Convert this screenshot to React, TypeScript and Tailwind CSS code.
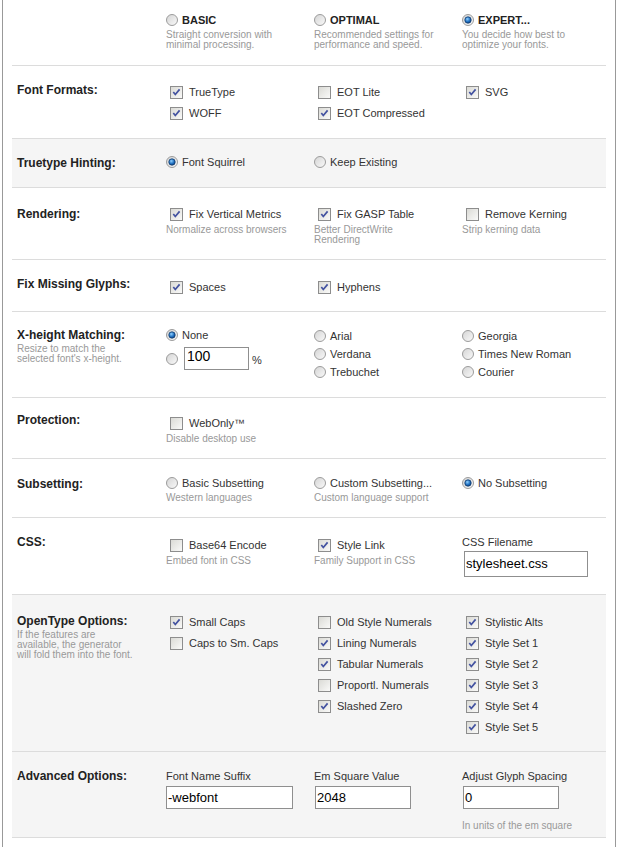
import React from 'react';

// checkbox + radio drawn like the old XP-style form controls
const Box = ({ on }: { on: boolean }) => (
  <svg width="13" height="13" viewBox="0 0 13 13" className="shrink-0">
    <defs>
      <linearGradient id="cbg" x1="0" y1="0" x2="1" y2="1">
        <stop offset="0" stopColor="#d9d9d4" />
        <stop offset="1" stopColor="#fbfbfa" />
      </linearGradient>
    </defs>
    <rect x="0.5" y="0.5" width="12" height="12" fill="url(#cbg)" stroke="#8d8d8d" />
    {on && <path d="M3.3 6 L5.3 8.5 L9.6 3.4" stroke="#4352a0" strokeWidth="1.7" fill="none" />}
  </svg>
);

const Dot = ({ on }: { on: boolean }) => (
  <svg width="12" height="12" viewBox="0 0 12 12" className="shrink-0">
    <defs>
      <linearGradient id="rbg" x1="0" y1="0" x2="1" y2="1">
        <stop offset="0" stopColor="#d4d4d4" />
        <stop offset="1" stopColor="#fafafa" />
      </linearGradient>
      <radialGradient id="rdot" cx="0.4" cy="0.35" r="0.7">
        <stop offset="0" stopColor="#8fd0ff" />
        <stop offset="0.6" stopColor="#1f6fc0" />
        <stop offset="1" stopColor="#0b3d7a" />
      </radialGradient>
    </defs>
    <circle cx="6" cy="6" r="5.5" fill="url(#rbg)" stroke="#9c9c9c" />
    {on && <circle cx="6" cy="6" r="3.2" fill="url(#rdot)" stroke="#123c6e" strokeWidth="0.8" />}
  </svg>
);

const Sub = ({ children, w = 'w-[125px]' }: { children: React.ReactNode; w?: string }) => (
  <p className={`${w} text-[10px] leading-[10px] text-[#999]`}>{children}</p>
);

const Check = ({ on, label, sub }: { on: boolean; label: string; sub?: string }) => (
  <div>
    <div className="flex h-[21px] items-center">
      <span className="ml-[4px] mr-[6px] flex">
        <Box on={on} />
      </span>
      <span className="text-[11px] text-[#333]">{label}</span>
    </div>
    {sub && <Sub>{sub}</Sub>}
  </div>
);

const Radio = ({ on, label, sub, bold }: { on: boolean; label: string; sub?: string; bold?: boolean }) => (
  <div>
    <div className="flex h-[18px] items-center">
      <span className="mr-[4px] flex">
        <Dot on={on} />
      </span>
      <span className={bold ? 'text-[11px] font-bold text-[#222]' : 'text-[11px] text-[#333]'}>{label}</span>
    </div>
    {sub && (
      <div className="mt-[1px]">
        <Sub>{sub}</Sub>
      </div>
    )}
  </div>
);

const Field = ({ value, w, h = 'h-[23px]' }: { value: string; w: string; h?: string }) => (
  <div className={`${w} ${h} flex items-center border border-[#8f8f8f] bg-white pl-[1px] text-[13px] text-black`}>
    {value}
  </div>
);

const Caption = ({ children }: { children: React.ReactNode }) => (
  <p className="text-[11px] leading-[13px] text-[#333]">{children}</p>
);

type RowProps = {
  label?: string;
  note?: string;
  gray?: boolean;
  h: string;
  lpt: string;
  children: React.ReactNode;
};

const Row = ({ label, note, gray, h, lpt, children }: RowProps) => (
  <div className={`grid ${h} grid-cols-[154px_148px_148px_143px] border-b border-[#dcdcdc] ${gray ? 'bg-[#f5f5f5]' : 'bg-white'}`}>
    <div className={`${lpt} pl-[5px]`}>
      {label && <h3 className="text-[12px] font-bold leading-[14px] text-[#222]">{label}</h3>}
      {note && (
        <div className="mt-[2px]">
          <Sub w="w-[120px]">{note}</Sub>
        </div>
      )}
    </div>
    {children}
  </div>
);

const App = () => {
  return (
    <div className="min-h-screen bg-white font-['Liberation_Sans',Arial,sans-serif]">
      <div className="ml-[2px] w-[614px] border-x border-[#999] px-[9px]">
        {/* Presets */}
        <Row h="h-[66px]" lpt="pt-0">
          <div className="pt-[11px]">
            <Radio bold on={false} label="BASIC" sub="Straight conversion with minimal processing." />
          </div>
          <div className="pt-[11px]">
            <Radio bold on={false} label="OPTIMAL" sub="Recommended settings for performance and speed." />
          </div>
          <div className="pt-[11px]">
            <Radio bold on label="EXPERT..." sub="You decide how best to optimize your fonts." />
          </div>
        </Row>

        <Row label="Font Formats:" h="h-[73px]" lpt="pt-[17px]">
          <div className="pt-[16px]">
            <Check on label="TrueType" />
            <Check on label="WOFF" />
          </div>
          <div className="pt-[16px]">
            <Check on={false} label="EOT Lite" />
            <Check on label="EOT Compressed" />
          </div>
          <div className="pt-[16px]">
            <Check on label="SVG" />
          </div>
        </Row>

        <Row label="Truetype Hinting:" gray h="h-[49px]" lpt="pt-[17px]">
          <div className="pt-[14px]">
            <Radio on label="Font Squirrel" />
          </div>
          <div className="pt-[14px]">
            <Radio on={false} label="Keep Existing" />
          </div>
          <div />
        </Row>

        <Row label="Rendering:" h="h-[72px]" lpt="pt-[19px]">
          <div className="pt-[16px]">
            <Check on label="Fix Vertical Metrics" sub="Normalize across browsers" />
          </div>
          <div className="pt-[16px]">
            <Check on label="Fix GASP Table" sub="Better DirectWrite Rendering" />
          </div>
          <div className="pt-[16px]">
            <Check on={false} label="Remove Kerning" sub="Strip kerning data" />
          </div>
        </Row>

        <Row label="Fix Missing Glyphs:" h="h-[52px]" lpt="pt-[17px]">
          <div className="pt-[17px]">
            <Check on label="Spaces" />
          </div>
          <div className="pt-[17px]">
            <Check on label="Hyphens" />
          </div>
          <div />
        </Row>

        <Row
          label="X-height Matching:"
          note="Resize to match the selected font's x-height."
          h="h-[86px]"
          lpt="pt-[16px]"
        >
          <div className="pt-[14px]">
            <Radio on label="None" />
            <div className="mt-[3px] flex items-center">
              <span className="mr-[6px] flex">
                <Dot on={false} />
              </span>
              <div className="h-[23px] w-[65px] border border-[#8f8f8f] bg-white pl-[2px] text-[14px] leading-[16px] text-black">
                100
              </div>
              <span className="ml-[3px] mt-[3px] text-[11px] text-[#333]">%</span>
            </div>
          </div>
          <div className="pt-[15px]">
            <Radio on={false} label="Arial" />
            <Radio on={false} label="Verdana" />
            <Radio on={false} label="Trebuchet" />
          </div>
          <div className="pt-[15px]">
            <Radio on={false} label="Georgia" />
            <Radio on={false} label="Times New Roman" />
            <Radio on={false} label="Courier" />
          </div>
        </Row>

        <Row label="Protection:" h="h-[61px]" lpt="pt-[15px]">
          <div className="pt-[15px]">
            <Check on={false} label="WebOnly™" sub="Disable desktop use" />
          </div>
          <div />
          <div />
        </Row>

        <Row label="Subsetting:" h="h-[59px]" lpt="pt-[18px]">
          <div className="pt-[15px]">
            <Radio on={false} label="Basic Subsetting" sub="Western languages" />
          </div>
          <div className="pt-[15px]">
            <Radio on={false} label="Custom Subsetting..." sub="Custom language support" />
          </div>
          <div className="pt-[15px]">
            <Radio on label="No Subsetting" />
          </div>
        </Row>

        <Row label="CSS:" h="h-[77px]" lpt="pt-[17px]">
          <div className="pt-[17px]">
            <Check on={false} label="Base64 Encode" sub="Embed font in CSS" />
          </div>
          <div className="pt-[17px]">
            <Check on label="Style Link" sub="Family Support in CSS" />
          </div>
          <div className="pt-[18px]">
            <Caption>CSS Filename</Caption>
            <div className="ml-[2px] mt-[2px]">
              <Field value="stylesheet.css" w="w-[124px]" h="h-[26px]" />
            </div>
          </div>
        </Row>

        <Row
          label="OpenType Options:"
          note="If the features are available, the generator will fold them into the font."
          gray
          h="h-[157px]"
          lpt="pt-[19px]"
        >
          <div className="pt-[17px]">
            <Check on label="Small Caps" />
            <Check on={false} label="Caps to Sm. Caps" />
          </div>
          <div className="pt-[17px]">
            <Check on={false} label="Old Style Numerals" />
            <Check on label="Lining Numerals" />
            <Check on label="Tabular Numerals" />
            <Check on={false} label="Proportl. Numerals" />
            <Check on label="Slashed Zero" />
          </div>
          <div className="pt-[17px]">
            <Check on label="Stylistic Alts" />
            <Check on label="Style Set 1" />
            <Check on label="Style Set 2" />
            <Check on label="Style Set 3" />
            <Check on label="Style Set 4" />
            <Check on label="Style Set 5" />
          </div>
        </Row>

        <Row label="Advanced Options:" gray h="h-[86px]" lpt="pt-[17px]">
          <div className="pt-[18px]">
            <Caption>Font Name Suffix</Caption>
            <div className="mt-[3px]">
              <Field value="-webfont" w="w-[127px]" />
            </div>
          </div>
          <div className="pt-[18px]">
            <Caption>Em Square Value</Caption>
            <div className="ml-[1px] mt-[3px]">
              <Field value="2048" w="w-[96px]" />
            </div>
          </div>
          <div className="pt-[18px]">
            <Caption>Adjust Glyph Spacing</Caption>
            <div className="ml-[1px] mt-[3px]">
              <Field value="0" w="w-[96px]" />
            </div>
            <div className="mt-[12px]">
              <Sub>In units of the em square</Sub>
            </div>
          </div>
        </Row>

        <div className="h-[40px]" />
      </div>
    </div>
  );
};

export default App;
